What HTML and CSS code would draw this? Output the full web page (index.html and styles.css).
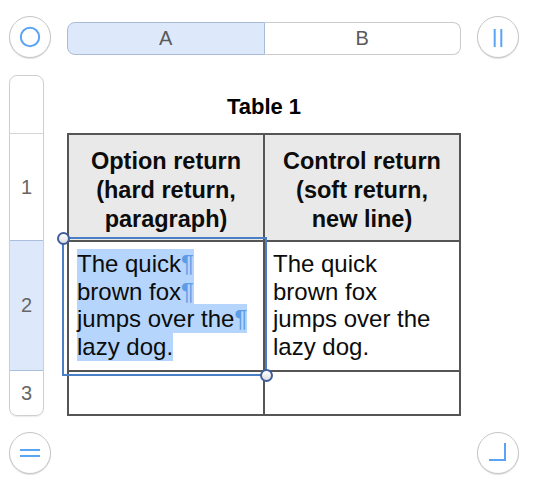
FILE: index.html
```html
<!DOCTYPE html>
<html lang="en">
<head>
<meta charset="utf-8">
<title>Table 1</title>
<link rel="stylesheet" href="styles.css">
</head>
<body>
<div class="app">
  <div class="round-btn">
    <svg width="42" height="42" viewBox="0 0 42 42"><circle cx="21" cy="21" r="9.2" fill="none" stroke="#5ba4f4" stroke-width="2"/></svg>
  </div>
  <div class="col-bar">
    <div class="col-seg col-seg-active">A</div>
    <div class="col-seg">B</div>
  </div>
  <div class="round-btn">
    <svg width="42" height="42" viewBox="0 0 42 42"><path d="M17.7 13V31M24.3 13V31" stroke="#5ba4f4" stroke-width="2" fill="none"/></svg>
  </div>

  <div class="row-bar">
    <div class="row-seg row-seg-top"></div>
    <div class="row-seg row-seg-1">1</div>
    <div class="row-seg row-seg-2">2</div>
    <div class="row-seg row-seg-3">3</div>
  </div>
  <div class="sheet">
    <div class="table-title">Table 1</div>
    <div class="table-wrap">
      <div class="grid-table">
        <div class="cell head">Option return<br>(hard return,<br>paragraph)</div>
        <div class="cell head">Control return<br>(soft return,<br>new line)</div>
        <div class="cell body"><span class="hl">The quick<span class="pil">¶</span></span><br><span class="hl">brown fox<span class="pil">¶</span></span><br><span class="hl">jumps over the<span class="pil">¶</span></span><br><span class="hl">lazy dog.</span></div>
        <div class="cell body">The quick<br>brown fox<br>jumps over the<br>lazy dog.</div>
        <div class="cell"></div>
        <div class="cell"></div>
      </div>
      <div class="selection">
        <span class="handle handle-tl"></span>
        <span class="handle handle-br"></span>
      </div>
    </div>
  </div>
  <div class="spacer"></div>

  <div class="round-btn">
    <svg width="42" height="42" viewBox="0 0 42 42"><path d="M11 18H31M11 24H31" stroke="#5ba4f4" stroke-width="2" fill="none"/></svg>
  </div>
  <div class="spacer"></div>
  <div class="round-btn">
    <svg width="42" height="42" viewBox="0 0 42 42"><path d="M28 11V28H12" stroke="#5ba4f4" stroke-width="2" fill="none"/></svg>
  </div>
</div>
</body>
</html>
```

FILE: styles.css
```css
html, body {
  margin: 0;
  padding: 0;
  background: #ffffff;
}

body {
  width: 538px;
  height: 496px;
  overflow: hidden;
  font-family: "Liberation Sans", Arial, sans-serif;
  color: #111;
}

.app {
  display: grid;
  grid-template-columns: 42px 394px 42px;
  grid-template-rows: 43px 341px 42px;
  column-gap: 16px;
  row-gap: 16px;
  padding: 16px 0 0 9px;
}

.round-btn {
  width: 42px;
  height: 42px;
  box-sizing: border-box;
  border: 1px solid #c6c6c6;
  border-radius: 50%;
  background: #fff;
  box-shadow: 0 1px 1px rgba(0, 0, 0, 0.12);
  position: relative;
}

.round-btn svg {
  position: absolute;
  left: -1px;
  top: -1px;
}

.col-bar {
  display: flex;
  height: 33px;
  margin-top: 6px;
}

.col-seg {
  flex: 1;
  display: flex;
  align-items: center;
  justify-content: center;
  font-size: 20px;
  color: #5a5a5a;
  border: 1px solid #cbcbcb;
  border-left: none;
  border-radius: 0 8px 8px 0;
  background: #fff;
  box-sizing: border-box;
}

.col-seg-active {
  background: #dde9fa;
  border: 1px solid #a9bcd7;
  border-radius: 8px 0 0 8px;
}

.row-bar {
  width: 35px;
  height: 341px;
  box-sizing: border-box;
  border: 1px solid #cfcfcf;
  border-radius: 8px;
  display: flex;
  flex-direction: column;
  overflow: hidden;
  box-shadow: 0 1px 1px rgba(0, 0, 0, 0.08);
}

.row-seg {
  display: flex;
  align-items: center;
  justify-content: center;
  font-size: 20px;
  color: #666;
  border-bottom: 1px solid #d4d4d4;
  box-sizing: content-box;
}

.row-seg-top { height: 57px; }
.row-seg-1 { height: 106px; border-bottom-color: #a9bfdd; }
.row-seg-2 { height: 129px; background: #dde9fa; border-bottom-color: #a9bfdd; }
.row-seg-3 { height: 44px; border-bottom: none; }

.sheet {
  display: flex;
  flex-direction: column;
}

.table-title {
  height: 58px;
  box-sizing: border-box;
  padding-top: 19px;
  line-height: 26px;
  font-size: 22px;
  font-weight: bold;
  text-align: center;
  color: #000;
}

.table-wrap {
  position: relative;
}

.grid-table {
  display: grid;
  grid-template-columns: 194px 194px;
  grid-template-rows: 105px 128px 42px;
  gap: 2px;
  padding: 2px;
  background: #555;
  width: 394px;
  box-sizing: border-box;
}

.cell {
  background: #fff;
  box-sizing: border-box;
}

.head {
  background: #e9e9e9;
  font-weight: bold;
  font-size: 23.5px;
  line-height: 29px;
  text-align: center;
  padding-top: 12px;
  color: #0c0c0c;
}

.body {
  font-size: 24px;
  line-height: 27.5px;
  padding: 8px 0 0 8px;
  white-space: nowrap;
  color: #0c0c0c;
}

.hl {
  background: #b5d5fd;
  padding: 1px 0;
}

.pil {
  color: #5d9ce6;
}

.selection {
  position: absolute;
  left: -5px;
  top: 104px;
  width: 205px;
  height: 139px;
  box-sizing: border-box;
  border: 2px solid #4a7fc6;
  pointer-events: none;
}

.handle {
  position: absolute;
  width: 13px;
  height: 13px;
  box-sizing: border-box;
  border: 2px solid #3f5f9c;
  border-radius: 50%;
  background: linear-gradient(#ffffff, #dedede);
}

.handle-tl {
  left: -7.5px;
  top: -7.5px;
}

.handle-br {
  right: -7.5px;
  bottom: -7.5px;
}
```
